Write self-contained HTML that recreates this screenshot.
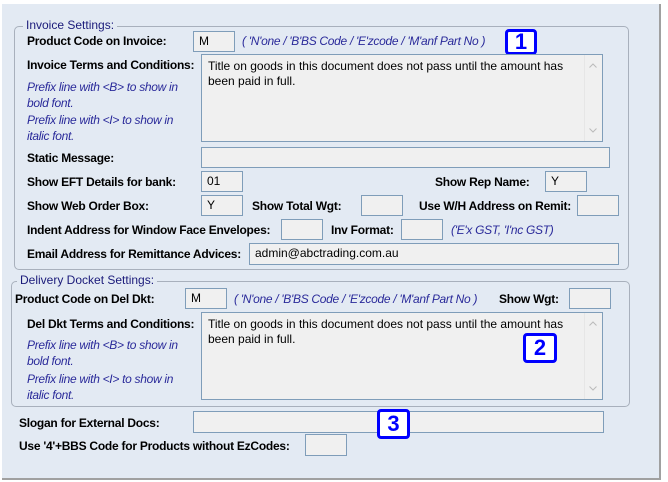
<!DOCTYPE html>
<html><head><style>
body{margin:0;width:668px;height:482px;background:#fff;font-family:"Liberation Sans",Arial,sans-serif;font-size:12px;overflow:hidden;position:relative}
.panel{position:absolute;left:2px;top:4px;width:657px;height:474px;background:#e3eaf3;border-right:2px solid #a0a0a0;border-bottom:2px solid #a0a0a0}
.a{position:absolute;white-space:nowrap}
.b{font-weight:bold;color:#000;letter-spacing:-0.25px}
.i{font-style:italic;color:#2a2a9a;letter-spacing:-0.3px}
.in{position:absolute;box-sizing:border-box;border:1px solid #7f9db9;background:#f0f0f0;padding:2px 5px;color:#000;font-size:12px;line-height:15px}
.fs{position:absolute;border:1px solid #a8b0bc;border-radius:5px}
.lg{position:absolute;background:#e3eaf3;color:#1a1a7a;padding:0 3px}
.badge{position:absolute;box-sizing:border-box;border:3px solid #0000ff;border-radius:4px;background:#fff;color:#0000ff;font-weight:bold;font-size:22px;text-align:center}
.sb{position:absolute;right:0;top:0;width:17px;height:100%;background:#f0f0f0;border-left:1px solid #e6e6e6}
.sb svg{position:absolute;left:4px}
</style></head><body>
<div class="panel"></div>
<div class="fs" style="left:14px;top:26px;width:613px;height:242px"></div>
<div class="lg" style="left:23px;top:18px">Invoice Settings:</div>
<div class="a b" style="left:27px;top:34px">Product Code on Invoice:</div>
<div class="in" style="left:193px;top:31px;width:42px;height:21px">M</div>
<div class="a i" style="left:242px;top:34px">( 'N'one / 'B'BS Code / 'E'zcode / 'M'anf Part No )</div>
<div class="badge" style="left:505px;top:29px;width:32px;height:26px;line-height:20px">1</div>
<div class="a b" style="left:27px;top:58px">Invoice Terms and Conditions:</div>
<div class="in" style="left:201px;top:54px;width:402px;height:88px;padding:4px 6px">Title on goods in this document does not pass until the amount has<br>been paid in full.<div class="sb"><svg style="top:8px" width="8" height="5"><path d="M0.5 4.5L4 1L7.5 4.5" fill="none" stroke="#bbb"/></svg><svg style="bottom:8px" width="8" height="5"><path d="M0.5 0.5L4 4L7.5 0.5" fill="none" stroke="#bbb"/></svg></div></div>
<div class="a i" style="left:27px;top:79px;line-height:16px">Prefix line with &lt;B&gt; to show in<br>bold font.</div>
<div class="a i" style="left:27px;top:112px;line-height:16px">Prefix line with &lt;I&gt; to show in<br>italic font.</div>
<div class="a b" style="left:27px;top:151px">Static Message:</div>
<div class="in" style="left:201px;top:147px;width:409px;height:21px"></div>
<div class="a b" style="left:27px;top:175px">Show EFT Details for bank:</div>
<div class="in" style="left:201px;top:171px;width:42px;height:21px">01</div>
<div class="a b" style="left:435px;top:175px">Show Rep Name:</div>
<div class="in" style="left:545px;top:171px;width:42px;height:21px">Y</div>
<div class="a b" style="left:27px;top:199px">Show Web Order Box:</div>
<div class="in" style="left:201px;top:195px;width:42px;height:21px">Y</div>
<div class="a b" style="left:252px;top:199px">Show Total Wgt:</div>
<div class="in" style="left:361px;top:195px;width:42px;height:21px"></div>
<div class="a b" style="left:419px;top:199px">Use W/H Address on Remit:</div>
<div class="in" style="left:577px;top:195px;width:42px;height:21px"></div>
<div class="a b" style="left:27px;top:223px">Indent Address for Window Face Envelopes:</div>
<div class="in" style="left:281px;top:219px;width:42px;height:21px"></div>
<div class="a b" style="left:331px;top:223px">Inv Format:</div>
<div class="in" style="left:401px;top:219px;width:42px;height:21px"></div>
<div class="a i" style="left:451px;top:223px">('E'x GST, 'I'nc GST)</div>
<div class="a b" style="left:27px;top:247px">Email Address for Remittance Advices:</div>
<div class="in" style="left:249px;top:243px;width:370px;height:22px">admin@abctrading.com.au</div>

<div class="fs" style="left:11px;top:281px;width:617px;height:124px"></div>
<div class="lg" style="left:17px;top:273px">Delivery Docket Settings:</div>
<div class="a b" style="left:15px;top:292px">Product Code on Del Dkt:</div>
<div class="in" style="left:185px;top:288px;width:42px;height:21px">M</div>
<div class="a i" style="left:234px;top:292px">( 'N'one / 'B'BS Code / 'E'zcode / 'M'anf Part No )</div>
<div class="a b" style="left:499px;top:292px">Show Wgt:</div>
<div class="in" style="left:569px;top:288px;width:42px;height:21px"></div>
<div class="a b" style="left:27px;top:317px">Del Dkt Terms and Conditions:</div>
<div class="in" style="left:201px;top:312px;width:402px;height:88px;padding:4px 6px">Title on goods in this document does not pass until the amount has<br>been paid in full.<div class="sb"><svg style="top:8px" width="8" height="5"><path d="M0.5 4.5L4 1L7.5 4.5" fill="none" stroke="#bbb"/></svg><svg style="bottom:8px" width="8" height="5"><path d="M0.5 0.5L4 4L7.5 0.5" fill="none" stroke="#bbb"/></svg></div></div>
<div class="a i" style="left:27px;top:337px;line-height:16px">Prefix line with &lt;B&gt; to show in<br>bold font.</div>
<div class="a i" style="left:27px;top:371px;line-height:16px">Prefix line with &lt;I&gt; to show in<br>italic font.</div>
<div class="badge" style="left:523px;top:333px;width:34px;height:30px;line-height:24px">2</div>
<div class="a b" style="left:19px;top:416px">Slogan for External Docs:</div>
<div class="in" style="left:193px;top:411px;width:411px;height:22px"></div>
<div class="badge" style="left:377px;top:409px;width:33px;height:30px;line-height:24px">3</div>
<div class="a b" style="left:19px;top:439px">Use '4'+BBS Code for Products without EzCodes:</div>
<div class="in" style="left:305px;top:434px;width:42px;height:22px"></div>
</body></html>
